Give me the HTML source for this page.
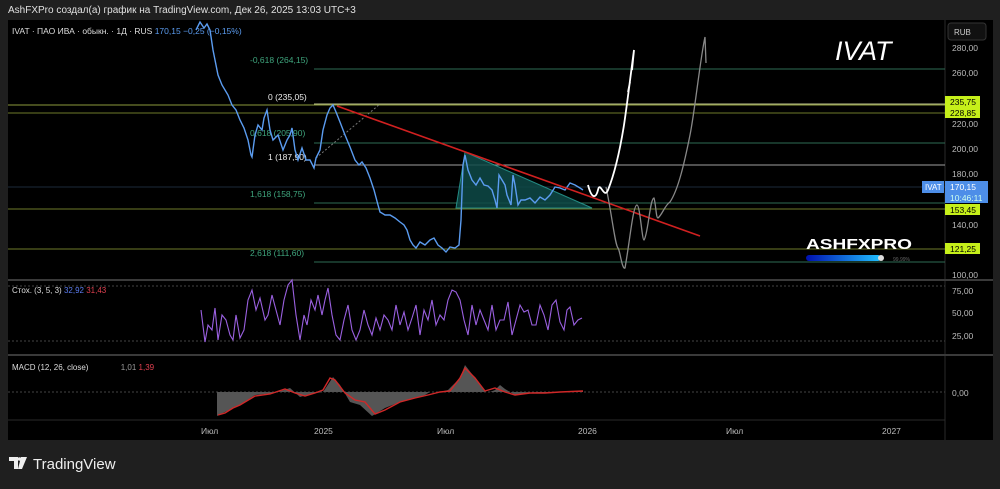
<!DOCTYPE html>
<html><head><meta charset="utf-8"><style>
body{margin:0;background:#1f1f1f;width:1000px;height:484px;overflow:hidden;font-family:"Liberation Sans",sans-serif}
</style></head><body>
<svg width="1000" height="484" xmlns="http://www.w3.org/2000/svg" font-family="Liberation Sans, DejaVu Sans, sans-serif">
<rect width="1000" height="484" fill="#1f1f1f"/>
<text x="8" y="13" font-size="10" fill="#e0e0e0">AshFXPro создал(а) график на TradingView.com, Дек 26, 2025 13:03 UTC+3</text>
<rect x="8" y="20" width="985" height="420" fill="#000"/>
<line x1="945" y1="20" x2="945" y2="440" stroke="#2a2a2a"/>
<line x1="8" y1="280" x2="993" y2="280" stroke="#3a3a3a" stroke-width="2"/>
<line x1="8" y1="355" x2="993" y2="355" stroke="#3a3a3a" stroke-width="2"/>
<line x1="8" y1="420" x2="945" y2="420" stroke="#2a2a2a"/>
<line x1="314" y1="69" x2="945" y2="69" stroke="#2e6b55"/>
<line x1="8" y1="105" x2="945" y2="105" stroke="#8b9a3c"/>
<line x1="314" y1="104" x2="945" y2="104" stroke="#b9be8a"/>
<line x1="8" y1="113" x2="945" y2="113" stroke="#6e7a2a"/>
<line x1="314" y1="143" x2="945" y2="143" stroke="#2e6b55"/>
<line x1="314" y1="165" x2="945" y2="165" stroke="#a0a0a0"/>
<line x1="8" y1="187" x2="945" y2="187" stroke="#1c2a3a"/>
<line x1="314" y1="203" x2="945" y2="203" stroke="#2e6b55"/>
<line x1="8" y1="209" x2="945" y2="209" stroke="#6e7a2a"/>
<line x1="8" y1="249" x2="945" y2="249" stroke="#6e7a2a"/>
<line x1="314" y1="262" x2="945" y2="262" stroke="#2e6b55"/>
<text x="250" y="63" font-size="8.5" fill="#3fa67e">-0,618 (264,15)</text>
<text x="268" y="100" font-size="8.5" fill="#eee">0 (235,05)</text>
<text x="250" y="136" font-size="8.5" fill="#3fa67e">0,618 (205,90)</text>
<text x="268" y="160" font-size="8.5" fill="#eee">1 (187,90)</text>
<text x="250" y="197" font-size="8.5" fill="#3fa67e">1,618 (158,75)</text>
<text x="250" y="256" font-size="8.5" fill="#3fa67e">2,618 (111,60)</text>
<line x1="316" y1="158" x2="380" y2="104" stroke="#777" stroke-dasharray="2,2"/>
<polygon points="465,152 456,208 592,208" fill="#0f4b48" stroke="#2aa39a" opacity="0.85"/>
<polyline fill="none" stroke="#5b9cf0" stroke-width="1.4" points="196,30 200,22 204,28 207,24 210,30 213,50 218,75 222,85 228,95 232,105 236,110 240,120 244,128 248,140 251,155 252,157 255,135 258,125 262,130 264,118 267,110 270,130 273,140 278,135 283,150 287,140 290,135 292,128 295,150 298,160 302,148 306,160 310,160 314,168 316,158 320,150 323,130 327,115 330,108 333,105 336,112 340,122 345,135 350,147 355,160 359,165 362,162 366,168 370,178 374,190 378,205 380,212 385,215 390,215 395,218 400,222 404,225 407,230 410,240 413,245 416,248 420,242 425,245 430,240 434,238 438,245 442,248 446,252 450,247 455,248 459,245 461,220 463,165 465,155 468,170 472,180 476,185 480,178 484,185 488,186 492,190 495,200 497,208 499,175 502,180 505,185 507,195 511,205 513,175 515,185 518,205 521,200 525,200 530,198 535,203 540,197 545,200 550,195 555,187 560,188 565,190 570,183 575,185 580,188 583,190"/>
<line x1="337" y1="106" x2="700" y2="236" stroke="#d02020" stroke-width="1.6"/>
<path d="M606,187 C612,215 615,245 618,248 C620,250 622,270 625,268 C630,240 633,205 637,205 C640,205 642,240 644,240 C648,235 650,198 654,198 C656,205 656,218 658,218 C662,215 665,205 670,202 C678,190 684,165 690,135 C695,110 700,60 705,37 L706,63" fill="none" stroke="#888" stroke-width="1.3"/>
<path d="M588,185 C592,200 596,198 598,190 C600,180 604,200 608,190 C614,175 620,150 624,125 C627,105 630,80 634,50 M628,92 L630,82 M634,50 L632,70" fill="none" stroke="#fff" stroke-width="1.8"/>
<text x="835" y="60" font-size="27" font-style="italic" fill="#fff">IVAT</text>
<text x="806" y="249" font-size="15" font-weight="bold" fill="#fff" textLength="106" lengthAdjust="spacingAndGlyphs">ASHFXPRO</text>
<defs><linearGradient id="g" x1="0" x2="1"><stop offset="0" stop-color="#0010b0"/><stop offset="1" stop-color="#20c0ff"/></linearGradient></defs>
<rect x="806" y="255" width="75" height="6" rx="3" fill="url(#g)"/>
<rect x="878" y="255" width="6" height="6" rx="3" fill="#ddd"/>
<text x="893" y="261" font-size="5" fill="#666">99,99%</text>
<text x="12" y="34" font-size="8.5" fill="#ddd">IVAT · ПАО ИВА · обыкн. · 1Д · RUS <tspan fill="#5b9cf0">170,15 −0,25 (−0,15%)</tspan></text>
<rect x="948" y="23" width="38" height="17" rx="3" fill="#111" stroke="#333"/>
<text x="954" y="35" font-size="8" fill="#ccc">RUB</text>
<g font-size="8.5" fill="#bbb">
<text x="952" y="51">280,00</text><text x="952" y="76">260,00</text><text x="952" y="127">220,00</text><text x="952" y="152">200,00</text><text x="952" y="177">180,00</text><text x="952" y="228">140,00</text><text x="952" y="278">100,00</text>
<text x="952" y="294">75,00</text><text x="952" y="316">50,00</text><text x="952" y="339">25,00</text><text x="952" y="396">0,00</text>
</g>
<rect x="945" y="96" width="35" height="11" fill="#c6f01a"/><text x="950" y="105" font-size="8.5" fill="#000">235,75</text>
<rect x="945" y="107" width="35" height="11" fill="#c6f01a"/><text x="950" y="116" font-size="8.5" fill="#000">228,85</text>
<rect x="922" y="181" width="22" height="12" fill="#4d8ee8"/><text x="925" y="190" font-size="8" fill="#fff">IVAT</text>
<rect x="945" y="181" width="43" height="22" fill="#4d8ee8"/><text x="950" y="190" font-size="8.5" fill="#fff">170,15</text><text x="950" y="201" font-size="8.5" fill="#cfe">10:46:11</text>
<rect x="945" y="204" width="35" height="11" fill="#c6f01a"/><text x="950" y="213" font-size="8.5" fill="#000">153,45</text>
<rect x="945" y="243" width="35" height="11" fill="#c6f01a"/><text x="950" y="252" font-size="8.5" fill="#000">121,25</text>
<text x="12" y="293" font-size="8" fill="#ddd">Стох. (3, 5, 3) <tspan fill="#5b7cf0">32,92</tspan> <tspan fill="#e04050">31,43</tspan></text>
<line x1="8" y1="286" x2="945" y2="286" stroke="#444" stroke-dasharray="2,2"/>
<line x1="8" y1="341" x2="945" y2="341" stroke="#444" stroke-dasharray="2,2"/>
<polyline fill="none" stroke="#9a60e0" stroke-width="1.1" points="201,310 205,342 208,325 212,330 215,308 218,340 222,315 226,320 230,335 233,340 236,315 240,338 244,330 248,300 252,290 256,310 260,298 265,320 268,315 272,295 276,310 280,325 284,300 288,285 292,280 296,315 300,340 304,315 307,325 311,300 315,310 318,295 322,315 325,300 328,288 332,315 336,335 340,340 344,320 348,305 352,330 356,340 360,330 364,310 368,325 372,335 376,318 380,330 384,315 388,320 392,330 396,305 400,325 404,312 408,330 412,318 416,305 420,335 424,310 428,320 432,300 436,325 440,315 444,320 448,300 452,290 456,292 460,300 464,320 468,335 472,305 476,325 480,310 484,320 488,330 492,305 496,330 500,320 504,320 508,302 512,335 516,320 520,305 524,312 528,310 532,325 536,325 540,305 544,315 548,330 552,305 556,300 560,322 564,330 567,310 570,307 574,325 578,320 582,318"/>
<text x="12" y="370" font-size="8" fill="#ddd">MACD (12, 26, close) <tspan dx="30" fill="#999">1,01</tspan> <tspan fill="#e04050">1,39</tspan></text>
<line x1="8" y1="392" x2="945" y2="392" stroke="#444" stroke-dasharray="2,2"/>
<path d="M217,392 L217,416 L225,412 L240,405 L255,395 L275,393 L290,388 L300,397 L310,394 L323,392 L333,377 L340,385 L350,402 L360,405 L372,416 L385,408 L400,402 L415,398 L425,395 L430,392 L440,392 L448,390 L460,378 L465,365 L475,378 L485,392 L490,392 L495,390 L500,385 L505,389 L515,395 L530,392 L545,393 L560,392 L583,391 L583,392 Z" fill="#555"/>
<polyline fill="none" stroke="#d02828" stroke-width="1.4" points="218,415 225,413 233,408 240,405 255,396 270,394 285,389 295,393 305,396 315,393 323,390 330,378 335,380 345,393 355,400 365,402 375,414 385,410 400,402 415,398 428,395 440,392 450,391 460,378 465,368 475,378 485,391 495,388 505,392 515,395 530,393 545,393 560,392 583,391"/>
<g font-size="8.5" fill="#bbb"><text x="201" y="434">Июл</text><text x="314" y="434">2025</text><text x="437" y="434">Июл</text><text x="578" y="434">2026</text><text x="726" y="434">Июл</text><text x="882" y="434">2027</text></g>
<path d="M9,457 h9 v12 h-4 v-8 h-5z M21,457 h6 l-5,12 h-4z" fill="#eee"/>
<circle cx="19.5" cy="459" r="1.8" fill="#eee"/>
<text x="33" y="469" font-size="15" fill="#eee">TradingView</text>
</svg>
</body></html>
